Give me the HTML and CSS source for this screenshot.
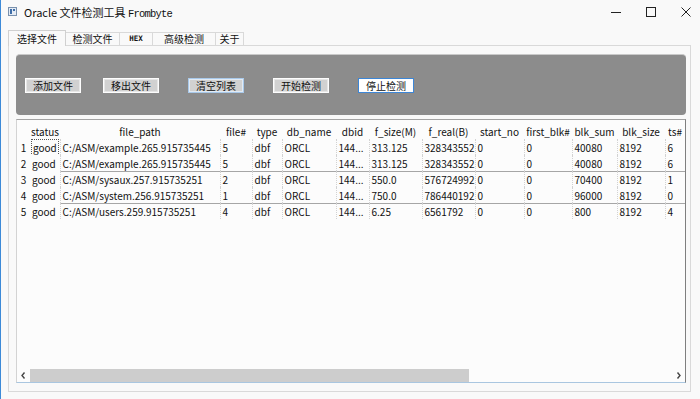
FILE: index.html
```html
<!DOCTYPE html>
<html>
<head>
  <meta charset="utf-8">
  <link rel="stylesheet" href="styles.css">
</head>
<body>
  <div class="window">
    <div class="titlebar">
      <svg class="app-icon" width="9" height="9" viewBox="0 0 9 9">
        <rect x="0.5" y="0.5" width="8" height="8" fill="#e4ebf4" stroke="#7890ad"/>
        <rect x="2" y="2" width="2" height="5" fill="#3f6ea8"/>
        <rect x="5" y="2" width="2" height="2" fill="#3f6ea8"/>
      </svg>
      <span class="title">Oracle 文件检测工具 <span class="mono">Frombyte</span></span>
      <div class="controls">
        <svg width="10" height="10" viewBox="0 0 10 10"><line x1="0" y1="5.5" x2="10" y2="5.5" stroke="#222" stroke-width="1"/></svg>
        <svg width="10" height="10" viewBox="0 0 10 10"><rect x="0.5" y="0.5" width="9" height="9" fill="none" stroke="#222" stroke-width="1"/></svg>
        <svg width="10" height="10" viewBox="0 0 10 10"><path d="M0.5 0.5 L9.5 9.5 M9.5 0.5 L0.5 9.5" stroke="#222" stroke-width="1"/></svg>
      </div>
    </div>

    <div class="tabs">
      <div class="tab active">选择文件</div>
      <div class="tab">检测文件</div>
      <div class="tab hex">HEX</div>
      <div class="tab">高级检测</div>
      <div class="tab">关于</div>
    </div>

    <div class="panel">
      <div class="toolbar">
        <button class="btn">添加文件</button>
        <button class="btn">移出文件</button>
        <button class="btn hover">清空列表</button>
        <button class="btn">开始检测</button>
        <button class="btn focus">停止检测</button>
      </div>

      <div class="grid-box">
        <table class="grid">
          <thead>
            <tr>
              <th></th><th>status</th><th>file_path</th><th>file#</th><th>type</th><th>db_name</th><th>dbid</th>
              <th>f_size(M)</th><th>f_real(B)</th><th>start_no</th><th>first_blk#</th><th>blk_sum</th><th>blk_size</th><th>ts#</th>
            </tr>
          </thead>
          <tbody>
            <tr>
              <td>1</td><td><span class="cur">good</span></td><td>C:/ASM/example.265.915735445</td><td>5</td><td>dbf</td><td>ORCL</td><td>144...</td>
              <td>313.125</td><td>328343552</td><td>0</td><td>0</td><td>40080</td><td>8192</td><td>6</td>
            </tr>
            <tr>
              <td>2</td><td>good</td><td>C:/ASM/example.265.915735445</td><td>5</td><td>dbf</td><td>ORCL</td><td>144...</td>
              <td>313.125</td><td>328343552</td><td>0</td><td>0</td><td>40080</td><td>8192</td><td>6</td>
            </tr>
            <tr class="split">
              <td>3</td><td>good</td><td>C:/ASM/sysaux.257.915735251</td><td>2</td><td>dbf</td><td>ORCL</td><td>144...</td>
              <td>550.0</td><td>576724992</td><td>0</td><td>0</td><td>70400</td><td>8192</td><td>1</td>
            </tr>
            <tr>
              <td>4</td><td>good</td><td>C:/ASM/system.256.915735251</td><td>1</td><td>dbf</td><td>ORCL</td><td>144...</td>
              <td>750.0</td><td>786440192</td><td>0</td><td>0</td><td>96000</td><td>8192</td><td>0</td>
            </tr>
            <tr class="split">
              <td>5</td><td>good</td><td>C:/ASM/users.259.915735251</td><td>4</td><td>dbf</td><td>ORCL</td><td>144...</td>
              <td>6.25</td><td>6561792</td><td>0</td><td>0</td><td>800</td><td>8192</td><td>4</td>
            </tr>
          </tbody>
        </table>

        <div class="hscroll">
          <div class="arrow">
            <svg width="5" height="7" viewBox="0 0 5 7"><path d="M3.5 0.5 L1 3.5 L3.5 6.5" fill="none" stroke="#444" stroke-width="1.4"/></svg>
          </div>
          <div class="thumb"></div>
          <div class="track"></div>
          <div class="arrow">
            <svg width="5" height="7" viewBox="0 0 5 7"><path d="M1.5 0.5 L4 3.5 L1.5 6.5" fill="none" stroke="#444" stroke-width="1.4"/></svg>
          </div>
        </div>
      </div>
    </div>
  </div>
</body>
</html>
```

FILE: styles.css
```css
body{margin:0;background:#f9f9f9;font-family:"Liberation Sans Narrow","Noto Sans CJK SC",sans-serif;color:#111;overflow:hidden}
.window{width:700px;height:399px;box-sizing:border-box;border-left:1px solid #3d8ad8;display:flex;flex-direction:column}

.titlebar{height:23px;flex:none;display:flex;align-items:center;padding-left:7px}
.app-icon{margin-right:7px}
.title{font-size:11px;font-family:"Liberation Sans Narrow","Noto Sans CJK SC",sans-serif}
.mono{font-family:"Liberation Mono",monospace;font-size:10.5px;letter-spacing:-0.8px}
.controls{margin-left:auto;margin-right:9px;display:flex;gap:25px;align-items:center}

.tabs{height:22px;flex:none;display:flex;align-items:flex-end;margin-left:7px}
.tab{box-sizing:border-box;height:13px;line-height:12px;border:1px solid #d9d9d9;border-bottom:none;background:#f9f9f9;font-family:"Noto Sans CJK SC",sans-serif;font-size:10px;text-align:center}
.tab+.tab{border-left:none}
.tab:nth-child(1){width:58px}
.tab:nth-child(2){width:54px}
.tab:nth-child(3){width:33px}
.tab:nth-child(4){width:63px}
.tab:nth-child(5){width:28px}
.tab.active{height:16px;line-height:15px;margin-bottom:-1px;position:relative;border-color:#d0d0d0}
.tab.hex{font-family:"DejaVu Sans Mono",monospace;font-size:7.5px;font-weight:bold}

.panel{flex:1;margin:0 9px 7px 7px;border:1px solid #d9d9d9;display:flex;flex-direction:column;padding:8px 4px 8px 7px}

.toolbar{flex:none;height:61px;box-sizing:border-box;background:#8c8c8c;border-top:1px solid #c9c9c9;border-radius:4px;display:flex;align-items:flex-start;padding:23px 0 0 9px;gap:29px}
.btn{width:56px;height:15px;padding:0;margin:0;background:#d1d1d1;border:1px solid #fdfdfd;box-shadow:inset 0 0 0 1px #e6e6e6;font-family:"Noto Sans CJK SC",sans-serif;font-size:10px;line-height:12px;color:#111}
.btn:nth-child(2){margin-left:-7px}
.btn.hover{border-color:#a9c9ea;box-shadow:inset 0 0 0 1px #e2ebf4}
.btn.focus{background:#fff;border-color:#3d86d6;box-shadow:none}

.grid-box{flex:1;margin-top:4px;background:#fcfcfc;border-top:1px solid #a3a3a3;border-left:1px solid #d3d3d3;border-right:1px solid #7f7f7f;border-bottom:1px solid #a9c6e0;display:flex;flex-direction:column}
.grid{border-collapse:collapse;table-layout:fixed;width:668px;font-size:10px;white-space:nowrap}
.grid th{font-weight:normal;height:15px;padding:4px 0 0;line-height:15px;text-align:center;vertical-align:middle;overflow:hidden}
.grid td{height:16px;line-height:15px;padding:0 0 0 2px;overflow:hidden;vertical-align:middle}
.grid td:nth-child(1){text-align:center;padding:0}
.grid td:nth-child(n+3){border-left:1px dotted #d2d2d2}
.grid tr.split td:nth-child(n+3){box-shadow:inset 0 1px #a6a6a6}
.cur{outline:1px dotted #555;outline-offset:0;padding:0 1px}

.grid th:nth-child(1){width:13px}
.grid th:nth-child(2){width:30px}
.grid th:nth-child(3){width:160px}
.grid th:nth-child(4){width:32px}
.grid th:nth-child(5){width:30px}
.grid th:nth-child(6){width:54px}
.grid th:nth-child(7){width:33px}
.grid th:nth-child(8){width:53px}
.grid th:nth-child(9){width:53px}
.grid th:nth-child(10){width:49px}
.grid th:nth-child(11){width:48px}
.grid th:nth-child(12){width:45px}
.grid th:nth-child(13){width:48px}
.grid th:nth-child(14){width:20px}

.hscroll{margin-top:auto;height:13px;display:flex}
.arrow{width:13px;display:flex;align-items:center;justify-content:center}
.thumb{width:439px;background:#cdcdcd}
.track{flex:1}
```
